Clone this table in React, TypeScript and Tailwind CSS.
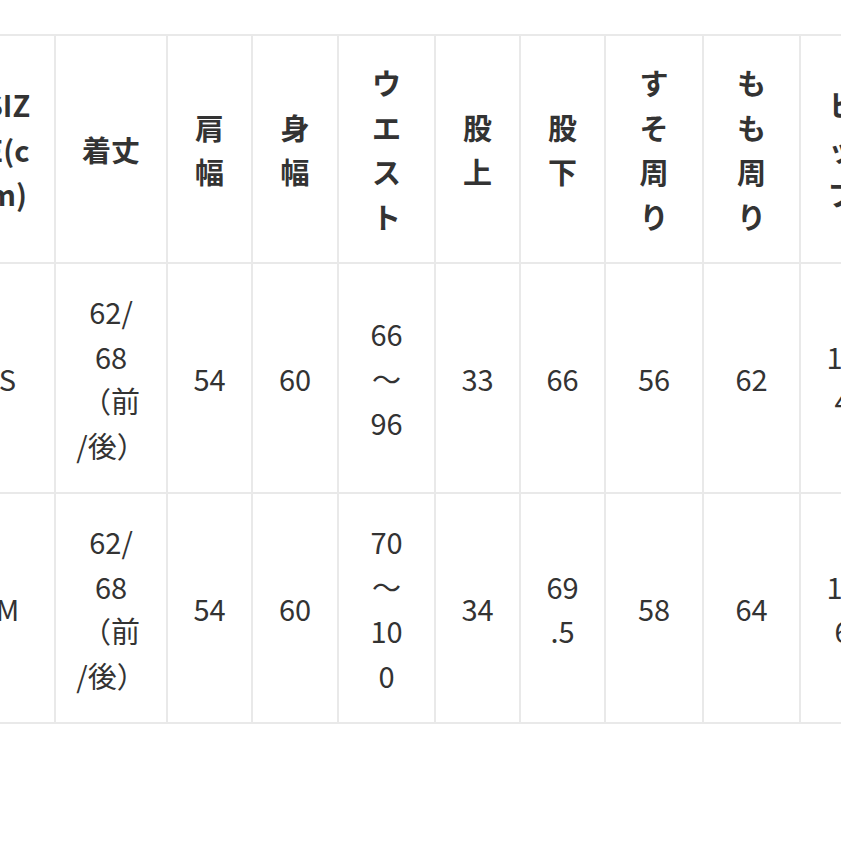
const columns = [
  { w: "w-[95px]", head: ["SIZ", "E(c", "m)"], s: ["S"], m: ["M"] },
  { w: "w-[112px]", head: ["着丈"], s: ["62/", "68", "（前", "/後）"], m: ["62/", "68", "（前", "/後）"] },
  { w: "w-[85px]", head: ["肩", "幅"], s: ["54"], m: ["54"] },
  { w: "w-[86px]", head: ["身", "幅"], s: ["60"], m: ["60"] },
  { w: "w-[97px]", head: ["ウ", "エ", "ス", "ト"], s: ["66", "～", "96"], m: ["70", "～", "10", "0"] },
  { w: "w-[85px]", head: ["股", "上"], s: ["33"], m: ["34"] },
  { w: "w-[85px]", head: ["股", "下"], s: ["66"], m: ["69", ".5"] },
  { w: "w-[98px]", head: ["す", "そ", "周", "り"], s: ["56"], m: ["58"] },
  { w: "w-[97px]", head: ["も", "も", "周", "り"], s: ["62"], m: ["64"] },
  { w: "w-[85px]", head: ["ヒ", "ッ", "プ"], s: ["10", "4"], m: ["10", "6"] },
];

const Cell = ({ lines, bold, h, w }: { lines: string[]; bold?: boolean; h: string; w: string }) => (
  <div
    className={`${w} ${h} shrink-0 flex flex-col items-center justify-center border-r-2 border-b-2 border-[#e9e9e9] text-center ${
      bold ? "font-bold" : "font-normal"
    }`}
  >
    {lines.map((line, i) => (
      <span key={i} className="block whitespace-nowrap">
        {line}
      </span>
    ))}
  </div>
);

export default function App() {
  return (
    <div
      className="w-[841px] h-[841px] overflow-hidden bg-white text-[#333333] text-[29px] leading-[44.5px]"
      style={{ fontFamily: '"Noto Sans CJK JP", "Noto Sans", sans-serif' }}
    >
      <div className="pt-[34px] ml-[-41px]">
        <div className="inline-flex flex-col border-t-2 border-l-2 border-[#e9e9e9]">
          <div className="flex">
            {columns.map((c, i) => (
              <Cell key={i} lines={c.head} bold w={c.w} h="h-[228px]" />
            ))}
          </div>
          <div className="flex">
            {columns.map((c, i) => (
              <Cell key={i} lines={c.s} w={c.w} h="h-[230px]" />
            ))}
          </div>
          <div className="flex">
            {columns.map((c, i) => (
              <Cell key={i} lines={c.m} w={c.w} h="h-[230px]" />
            ))}
          </div>
        </div>
      </div>
    </div>
  );
}
